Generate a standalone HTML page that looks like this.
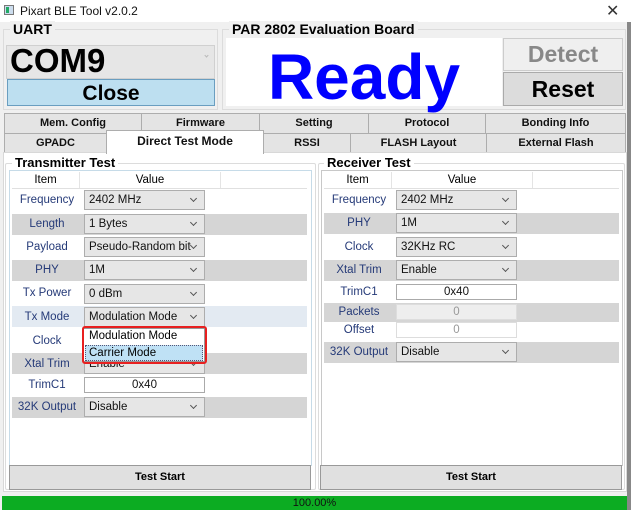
<!DOCTYPE html>
<html><head><meta charset="utf-8"><style>
*{box-sizing:border-box;margin:0;padding:0}
body{width:631px;height:510px;overflow:hidden;background:#f0f0f0;font-family:"Liberation Sans",sans-serif;position:relative}
.a{position:absolute}
.b{font-weight:bold}
.tab{position:absolute;background:#e4e4e4;border:1px solid #adadad;font-size:11px;font-weight:bold;text-align:center;color:#111}
.lab{position:absolute;font-size:11.5px;color:#253a78;text-align:center;width:70px}
.sh{position:absolute;background:#d5d5d5;height:21px}
.cb{position:absolute;height:20px;background:#e6e6e6;border:1px solid #adadad;font-size:11.5px;padding:3px 0 0 4px;color:#111}
.cb:after{content:"";position:absolute;right:8px;top:5px;width:4px;height:4px;border-right:1px solid #555;border-bottom:1px solid #555;transform:rotate(45deg)}
.tb{position:absolute;height:16px;background:#fff;border:1px solid #aaa;font-size:11.5px;text-align:center;color:#111;line-height:14px}
</style></head><body>
<div class="a" style="left:0;top:0;width:631px;height:22px;background:#fff"></div>
<div class="a" style="left:4px;top:5px;width:10px;height:10px;border:1px solid #777;background:#cde"></div>
<div class="a" style="left:6px;top:7px;width:3px;height:6px;background:#2a6"></div>
<div class="a" style="left:20px;top:4px;font-size:12px;color:#111">Pixart BLE Tool v2.0.2</div>
<div class="a" style="left:606px;top:1px;font-size:16px;color:#333">✕</div>
<div class="a" style="left:627px;top:22px;width:4px;height:488px;background:#888"></div>

<div class="a" style="left:3px;top:29px;width:215px;height:81px;border:1px solid #dcdcdc"></div>
<div class="a b" style="left:10px;top:21px;font-size:14px;background:#f0f0f0;padding:0 3px">UART</div>
<div class="a" style="left:6px;top:45px;width:209px;height:34px;background:#e6e6e6;border:1px solid #d0d0d0"></div>
<div class="a b" style="left:10px;top:42px;font-size:33px;color:#000">COM9</div>
<div class="a" style="left:205px;top:54px;width:3px;height:3px;border-right:1px solid #bbb;border-bottom:1px solid #bbb;transform:rotate(45deg)"></div>
<div class="a b" style="left:7px;top:79px;width:208px;height:27px;background:#bddff0;border:1px solid #6a9ec0;font-size:21px;text-align:center;line-height:27px">Close</div>

<div class="a" style="left:222px;top:29px;width:404px;height:81px;border:1px solid #dcdcdc"></div>
<div class="a b" style="left:229px;top:21px;font-size:14px;background:#f0f0f0;padding:0 3px">PAR 2802 Evaluation Board</div>
<div class="a" style="left:226px;top:38px;width:276px;height:68px;background:#fff"></div>
<div class="a b" style="left:226px;top:37px;width:276px;text-align:center;font-size:64px;color:#0000ff;line-height:80px">Ready</div>
<div class="a b" style="left:503px;top:38px;width:120px;height:33px;background:#efefef;border:1px solid #ccc;font-size:23px;color:#888;text-align:center;line-height:31px">Detect</div>
<div class="a b" style="left:503px;top:72px;width:120px;height:34px;background:#dcdcdc;border:1px solid #aaa;font-size:23px;color:#000;text-align:center;line-height:32px">Reset</div>

<div class="tab" style="left:4px;top:113px;width:138px;height:21px;line-height:19px">Mem. Config</div>
<div class="tab" style="left:141px;top:113px;width:119px;height:21px;line-height:19px">Firmware</div>
<div class="tab" style="left:259px;top:113px;width:110px;height:21px;line-height:19px">Setting</div>
<div class="tab" style="left:368px;top:113px;width:118px;height:21px;line-height:19px">Protocol</div>
<div class="tab" style="left:485px;top:113px;width:141px;height:21px;line-height:19px">Bonding Info</div>
<div class="tab" style="left:4px;top:133px;width:103px;height:20px;line-height:18px">GPADC</div>
<div class="tab" style="left:263px;top:133px;width:88px;height:20px;line-height:18px">RSSI</div>
<div class="tab" style="left:350px;top:133px;width:137px;height:20px;line-height:18px">FLASH Layout</div>
<div class="tab" style="left:486px;top:133px;width:140px;height:20px;line-height:18px">External Flash</div>
<div class="a" style="left:3px;top:152px;width:624px;height:340px;background:#fff;border:1px solid #d8d8d8"></div>
<div class="tab" style="left:106px;top:130px;width:158px;height:24px;line-height:20px;background:#fff;border-bottom:none;font-size:12px">Direct Test Mode</div>

<div class="a" style="left:5px;top:163px;width:311px;height:327px;border:1px solid #dcdcdc;border-radius:2px"></div>
<div class="a b" style="left:12px;top:155px;font-size:13px;background:#fff;padding:0 3px">Transmitter Test</div>
<div class="a" style="left:9px;top:170px;width:303px;height:296px;border:1px solid #c6dbe8"></div>
<div class="a" style="left:12px;top:172px;width:295px;height:17px;background:#fff;border-bottom:1px solid #e0e0e0"></div>
<div class="a" style="left:79px;top:172px;width:1px;height:16px;background:#e4e4e4"></div>
<div class="a" style="left:220px;top:172px;width:1px;height:16px;background:#e4e4e4"></div>
<div class="a" style="left:12px;top:174px;width:67px;text-align:center;font-size:11.5px">Item</div>
<div class="a" style="left:80px;top:174px;width:140px;text-align:center;font-size:11.5px">Value</div>

<div class="sh" style="left:12px;top:214px;width:295px"></div>
<div class="sh" style="left:12px;top:260px;width:295px"></div>
<div class="sh" style="left:12px;top:306px;width:295px;background:#e3eaf2"></div>
<div class="sh" style="left:12px;top:353px;width:295px"></div>
<div class="sh" style="left:12px;top:397px;width:295px"></div>

<div class="lab" style="left:12px;top:194px">Frequency</div>
<div class="lab" style="left:12px;top:218px">Length</div>
<div class="lab" style="left:12px;top:241px">Payload</div>
<div class="lab" style="left:12px;top:264px">PHY</div>
<div class="lab" style="left:12px;top:287px">Tx Power</div>
<div class="lab" style="left:12px;top:311px">Tx Mode</div>
<div class="lab" style="left:12px;top:335px">Clock</div>
<div class="lab" style="left:12px;top:358px">Xtal Trim</div>
<div class="lab" style="left:12px;top:379px">TrimC1</div>
<div class="lab" style="left:10px;top:401px;width:74px">32K Output</div>

<div class="cb" style="left:84px;top:190px;width:121px">2402 MHz</div>
<div class="cb" style="left:84px;top:214px;width:121px">1 Bytes</div>
<div class="cb" style="left:84px;top:237px;width:121px">Pseudo-Random bit</div>
<div class="cb" style="left:84px;top:260px;width:121px">1M</div>
<div class="cb" style="left:84px;top:284px;width:121px">0 dBm</div>
<div class="cb" style="left:84px;top:307px;width:121px">Modulation Mode</div>
<div class="cb" style="left:84px;top:354px;width:121px">Enable</div>
<div class="tb" style="left:84px;top:377px;width:121px">0x40</div>
<div class="cb" style="left:84px;top:397px;width:121px">Disable</div>

<div class="a" style="left:83px;top:328px;width:122px;height:34px;background:#fff;border:1px solid #999"></div>
<div class="a" style="left:89px;top:330px;font-size:11.5px">Modulation Mode</div>
<div class="a" style="left:85px;top:345px;width:118px;height:16px;background:#bfe1f5;border:1px dotted #557"></div>
<div class="a" style="left:89px;top:347px;font-size:11.5px">Carrier Mode</div>
<div class="a" style="left:82px;top:326px;width:125px;height:38px;border:2px solid #e82020;border-radius:3px"></div>

<div class="a b" style="left:9px;top:465px;width:302px;height:25px;background:#e0e0e0;border:1px solid #999;font-size:11px;text-align:center;line-height:23px">Test Start</div>

<div class="a" style="left:318px;top:163px;width:307px;height:327px;border:1px solid #dcdcdc;border-radius:2px"></div>
<div class="a b" style="left:324px;top:155px;font-size:13px;background:#fff;padding:0 3px">Receiver Test</div>
<div class="a" style="left:321px;top:170px;width:302px;height:296px;border:1px solid #c8c8c8"></div>
<div class="a" style="left:324px;top:172px;width:295px;height:17px;border-bottom:1px solid #e0e0e0"></div>
<div class="a" style="left:391px;top:172px;width:1px;height:16px;background:#e4e4e4"></div>
<div class="a" style="left:532px;top:172px;width:1px;height:16px;background:#e4e4e4"></div>
<div class="a" style="left:324px;top:174px;width:67px;text-align:center;font-size:11.5px">Item</div>
<div class="a" style="left:392px;top:174px;width:140px;text-align:center;font-size:11.5px">Value</div>

<div class="sh" style="left:324px;top:213px;width:295px"></div>
<div class="sh" style="left:324px;top:260px;width:295px"></div>
<div class="sh" style="left:324px;top:303px;width:295px;height:19px"></div>
<div class="sh" style="left:324px;top:342px;width:295px"></div>

<div class="lab" style="left:324px;top:194px">Frequency</div>
<div class="lab" style="left:324px;top:217px">PHY</div>
<div class="lab" style="left:324px;top:241px">Clock</div>
<div class="lab" style="left:324px;top:264px">Xtal Trim</div>
<div class="lab" style="left:324px;top:286px">TrimC1</div>
<div class="lab" style="left:324px;top:306px">Packets</div>
<div class="lab" style="left:324px;top:324px">Offset</div>
<div class="lab" style="left:322px;top:346px;width:74px">32K Output</div>

<div class="cb" style="left:396px;top:190px;width:121px">2402 MHz</div>
<div class="cb" style="left:396px;top:213px;width:121px">1M</div>
<div class="cb" style="left:396px;top:237px;width:121px">32KHz RC</div>
<div class="cb" style="left:396px;top:260px;width:121px">Enable</div>
<div class="tb" style="left:396px;top:284px;width:121px">0x40</div>
<div class="tb" style="left:396px;top:304px;width:121px;background:#eee;border-color:#ddd;color:#999">0</div>
<div class="tb" style="left:396px;top:322px;width:121px;border-color:#ddd;color:#999">0</div>
<div class="cb" style="left:396px;top:342px;width:121px">Disable</div>

<div class="a b" style="left:320px;top:465px;width:302px;height:25px;background:#e0e0e0;border:1px solid #999;font-size:11px;text-align:center;line-height:23px">Test Start</div>

<div class="a" style="left:2px;top:496px;width:625px;height:14px;background:#0cac22;font-size:11px;text-align:center;line-height:14px;color:#111">100.00%</div>
</body></html>
